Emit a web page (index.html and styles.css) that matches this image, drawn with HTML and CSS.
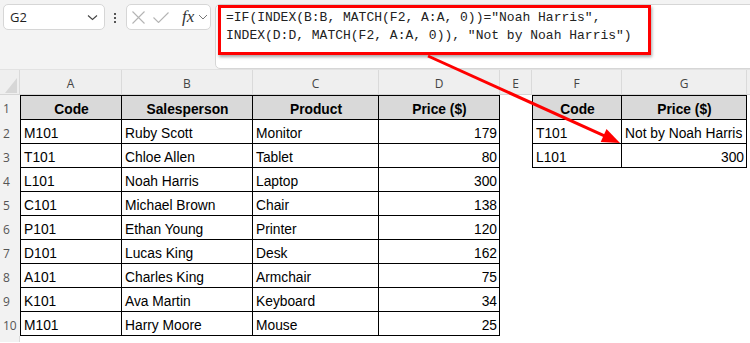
FILE: index.html
```html
<!DOCTYPE html>
<html lang="en">
<head>
<meta charset="utf-8">
<title>Lookup sheet</title>
<link rel="stylesheet" href="styles.css">
</head>
<body>
<div class="toolbar">
  <div class="namebox">
    <span>G2</span>
    <svg class="chev" width="11" height="7" viewBox="0 0 11 7"><path d="M1 1.5 5.5 5.5 10 1.5" fill="none" stroke="#444" stroke-width="1.1"/></svg>
  </div>
  <div class="grip"><i></i><i></i><i></i></div>
  <div class="fnbox">
    <svg class="ico-x" width="13" height="13" viewBox="0 0 13 13"><path d="M0.5 0.5 12.5 12.5M12.5 0.5 0.5 12.5" stroke="#b4b4b4" stroke-width="1.1" fill="none"/></svg>
    <svg class="ico-ok" width="16" height="11" viewBox="0 0 16 11"><path d="M0.5 5.5 5.5 10.5 15.5 0.5" stroke="#b4b4b4" stroke-width="1.1" fill="none"/></svg>
    <span class="fx">fx</span>
    <svg class="chev small" width="10" height="6" viewBox="0 0 10 6"><path d="M1 1 5 5 9 1" fill="none" stroke="#777" stroke-width="1"/></svg>
  </div>
  <div class="formula">
    <div class="expr">=IF(INDEX(B:B, MATCH(F2, A:A, 0))="Noah Harris",
INDEX(D:D, MATCH(F2, A:A, 0)), "Not by Noah Harris")</div>
  </div>
</div>

<div class="sheet">
  <div class="row">
    <div class="ch corner"><svg width="19" height="25" viewBox="0 0 19 25"><path d="M5 23H17V8Z" fill="#d7d7d7"/></svg></div>
    <div class="ch">A</div><div class="ch">B</div><div class="ch">C</div><div class="ch">D</div>
    <div class="ch">E</div><div class="ch">F</div><div class="ch">G</div><div class="ch fill"></div>
  </div>
  <div class="row head">
    <div class="rh">1</div>
    <div class="c t l">Code</div><div class="c t">Salesperson</div><div class="c t">Product</div><div class="c t">Price ($)</div>
    <div class="c"></div><div class="c t l">Code</div><div class="c t">Price ($)</div><div class="c"></div>
  </div>
  <div class="row">
    <div class="rh">2</div>
    <div class="c t l">M101</div><div class="c t">Ruby Scott</div><div class="c t">Monitor</div><div class="c t n">179</div>
    <div class="c"></div><div class="c t l">T101</div><div class="c t">Not by Noah Harris</div><div class="c"></div>
  </div>
  <div class="row">
    <div class="rh">3</div>
    <div class="c t l">T101</div><div class="c t">Chloe Allen</div><div class="c t">Tablet</div><div class="c t n">80</div>
    <div class="c"></div><div class="c t l">L101</div><div class="c t n">300</div><div class="c"></div>
  </div>
  <div class="row">
    <div class="rh">4</div>
    <div class="c t l">L101</div><div class="c t">Noah Harris</div><div class="c t">Laptop</div><div class="c t n">300</div>
    <div class="c"></div><div class="c"></div><div class="c"></div><div class="c"></div>
  </div>
  <div class="row">
    <div class="rh">5</div>
    <div class="c t l">C101</div><div class="c t">Michael Brown</div><div class="c t">Chair</div><div class="c t n">138</div>
    <div class="c"></div><div class="c"></div><div class="c"></div><div class="c"></div>
  </div>
  <div class="row">
    <div class="rh">6</div>
    <div class="c t l">P101</div><div class="c t">Ethan Young</div><div class="c t">Printer</div><div class="c t n">120</div>
    <div class="c"></div><div class="c"></div><div class="c"></div><div class="c"></div>
  </div>
  <div class="row">
    <div class="rh">7</div>
    <div class="c t l">D101</div><div class="c t">Lucas King</div><div class="c t">Desk</div><div class="c t n">162</div>
    <div class="c"></div><div class="c"></div><div class="c"></div><div class="c"></div>
  </div>
  <div class="row">
    <div class="rh">8</div>
    <div class="c t l">A101</div><div class="c t">Charles King</div><div class="c t">Armchair</div><div class="c t n">75</div>
    <div class="c"></div><div class="c"></div><div class="c"></div><div class="c"></div>
  </div>
  <div class="row">
    <div class="rh">9</div>
    <div class="c t l">K101</div><div class="c t">Ava Martin</div><div class="c t">Keyboard</div><div class="c t n">34</div>
    <div class="c"></div><div class="c"></div><div class="c"></div><div class="c"></div>
  </div>
  <div class="row">
    <div class="rh">10</div>
    <div class="c t l">M101</div><div class="c t">Harry Moore</div><div class="c t">Mouse</div><div class="c t n">25</div>
    <div class="c"></div><div class="c"></div><div class="c"></div><div class="c"></div>
  </div>
  <div class="row">
    <div class="rh last"></div>
  </div>
</div>

<!-- callout from the formula to the result cell -->
<svg class="callout" width="750" height="343" viewBox="0 0 750 343">
  <line x1="428" y1="56" x2="605" y2="136.2" stroke="#f00" stroke-width="3"/>
  <polygon points="620,143 600.7,141.9 606.5,129.1" fill="#f00"/>
</svg>
</body>
</html>
```

FILE: styles.css
```css
* { box-sizing: border-box; }

html, body { margin: 0; }

body {
  position: relative;
  width: 750px;
  height: 343px;
  overflow: hidden;
  background: #fff;
  font-family: "Liberation Sans", Arial, sans-serif;
}

/* formula bar strip */
.toolbar {
  height: 70px;
  background: #f3f3f3;
  display: flex;
  align-items: flex-start;
  padding: 4px 0 0 3px;
  border-bottom: 1px solid #e2e2e2;
}

.namebox {
  width: 102px;
  height: 26px;
  background: #fff;
  border: 1px solid #d6d6d6;
  border-radius: 5px;
  display: flex;
  align-items: center;
  justify-content: space-between;
  padding: 0 6px 0 6px;
  font-family: "Open Sans", sans-serif;
  font-size: 13px;
  color: #1f1f1f;
}

.chev { display: block; }

.grip {
  display: flex;
  flex-direction: column;
  gap: 2px;
  margin: 9px 10px 0 9px;
}

.grip i {
  display: block;
  width: 2px;
  height: 2px;
  background: #555;
}

.fnbox {
  width: 85px;
  height: 26px;
  background: #fff;
  border: 1px solid #d6d6d6;
  border-radius: 5px;
  display: flex;
  align-items: center;
}

.ico-x { display: block; margin-left: 5px; }
.ico-ok { display: block; margin-left: 8px; }

.fx {
  margin-left: 13px;
  font-family: "Liberation Serif", serif;
  font-style: italic;
  font-size: 17px;
  line-height: 20px;
  color: #333;
}

.chev.small { margin-left: 4px; }

.formula {
  flex: 1;
  margin-left: 4px;
  margin-right: -8px;
  height: 65px;
  background: #fff;
  border: 1px solid #d6d6d6;
  border-radius: 5px;
}

.expr {
  margin-left: 2px;
  width: 433px;
  border: 3px solid #f00;
  padding: 1px 0 7px 5px;
  font-family: "Liberation Mono", monospace;
  font-size: 13px;
  line-height: 18px;
  color: #222;
  white-space: pre;
  box-shadow: 1px 2px 3px rgba(0, 0, 0, 0.35);
}

/* worksheet grid */
.sheet {
  display: grid;
  grid-template-columns: 20px 102px 131px 126px 121px 32px 90px 125px 1fr;
  grid-template-rows: 25px 25px repeat(9, 24px) 1fr;
  height: 272px;
}

.row { display: contents; }

.ch {
  background: #efefef;
  border-right: 1px solid #dadada;
  border-bottom: 1px solid #d6d6d6;
  display: flex;
  align-items: center;
  justify-content: center;
  padding-top: 3px;
  font-family: "Open Sans", sans-serif;
  font-size: 12px;
  color: #444;
}

.ch.corner { padding: 0; align-items: stretch; }
.ch.fill { border-right: 0; }

.rh {
  background: #f2f2f2;
  display: flex;
  align-items: center;
  padding: 2px 0 0 3px;
  font-family: "Open Sans", sans-serif;
  font-size: 12px;
  color: #555;
}

.rh.last { border-right: 1px solid #dadada; }

.c {
  display: flex;
  align-items: flex-end;
  padding: 0 2px 1px 3px;
  font-size: 13.8px;
  line-height: 16px;
  color: #000;
  white-space: nowrap;
}

.t {
  border-right: 1px solid #000;
  border-bottom: 1px solid #000;
}

.l { border-left: 1px solid #000; }

.head .t {
  border-top: 1px solid #000;
  background: #d9d9d9;
  font-weight: bold;
  justify-content: center;
}

.n { justify-content: flex-end; }

/* annotation arrow drawn over the sheet */
.callout {
  position: absolute;
  left: 0;
  top: 0;
  pointer-events: none;
}
```
